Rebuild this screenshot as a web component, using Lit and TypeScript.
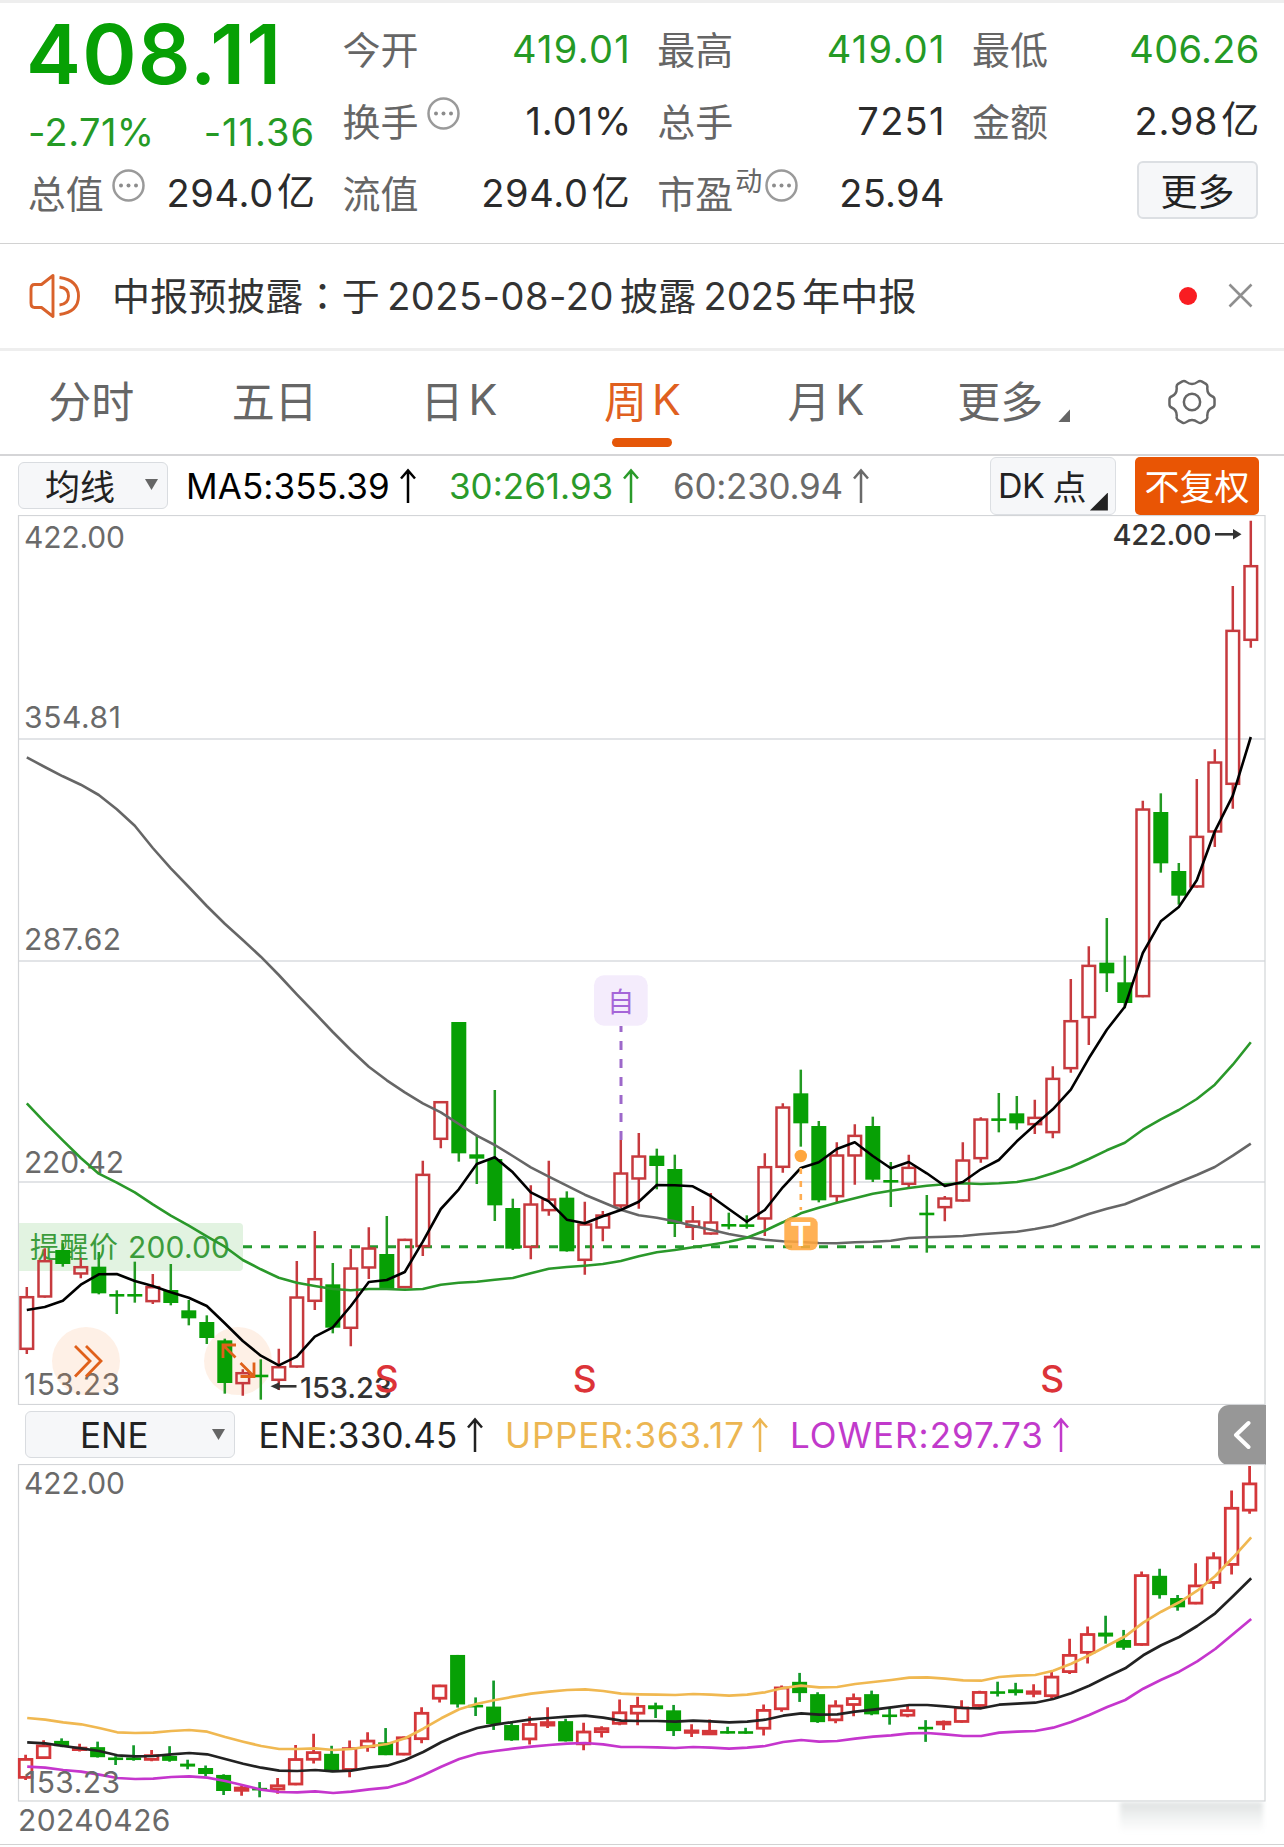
import { LitElement, html, svg, css } from "lit";
import { customElement, property } from "lit/decorators.js";

/* Vertical positions are stored in thirds of a pixel, measured from y = 960. */
type Candle = [high: number, top: number, bottom: number, low: number, up: 0 | 1];

const CANDLES: Candle[] = [
  [981, 1008, 1170, 1182, 1], [865, 900, 1013, 1013, 1], [850, 870, 912, 920, 0], [893, 918, 944, 955, 1],
  [876, 920, 1000, 1003, 0], [991, 1002, 1009, 1062, 0], [905, 1002, 1009, 1028, 0], [942, 978, 1027, 1032, 1],
  [912, 990, 1029, 1036, 0], [1020, 1051, 1075, 1096, 0], [1066, 1086, 1134, 1152, 0], [1136, 1141, 1269, 1301, 0],
  [1228, 1236, 1273, 1307, 1], [1198, 1244, 1251, 1319, 0], [1166, 1218, 1263, 1290, 1], [903, 1009, 1223, 1223, 1],
  [813, 954, 1026, 1050, 1], [909, 973, 1103, 1120, 0], [867, 922, 1107, 1159, 1], [802, 862, 926, 957, 1],
  [768, 882, 984, 984, 0], [836, 836, 985, 985, 1], [602, 641, 862, 888, 1], [423, 423, 540, 565, 1],
  [186, 186, 580, 605, 0], [524, 583, 596, 672, 0], [390, 597, 736, 783, 0], [716, 744, 866, 870, 0],
  [676, 730, 864, 898, 1], [602, 715, 754, 767, 1], [694, 713, 874, 875, 0], [725, 790, 903, 944, 1],
  [753, 763, 806, 844, 1], [540, 637, 740, 745, 1], [519, 586, 659, 746, 1], [566, 587, 618, 688, 0],
  [584, 627, 792, 831, 0], [738, 781, 804, 840, 1], [699, 784, 824, 824, 1], [758, 792, 799, 808, 0],
  [766, 793, 800, 806, 0], [580, 618, 779, 828, 1], [430, 439, 624, 638, 1], [329, 400, 490, 560, 0],
  [483, 498, 721, 727, 0], [547, 583, 712, 730, 1], [493, 524, 590, 674, 1], [470, 498, 659, 666, 0],
  [606, 660, 667, 741, 0], [584, 620, 675, 682, 1], [705, 758, 765, 878, 0], [708, 712, 745, 784, 1],
  [547, 598, 725, 725, 1], [472, 475, 598, 608, 1], [399, 475, 482, 517, 0], [408, 460, 490, 509, 0],
  [419, 470, 496, 522, 1], [319, 353, 520, 535, 1], [57, 180, 328, 338, 1], [-41, 14, 175, 255, 1],
  [-126, 8, 40, 96, 0], [-13, 67, 129, 145, 0], [-478, -455, 112, 112, 1], [-500, -444, -290, -262, 0],
  [-291, -267, -193, -166, 0], [-543, -373, -217, -217, 1], [-632, -596, -382, -339, 1],
  [-1122, -991, -525, -454, 1], [-1318, -1185, -957, -937, 1],
];

const MA5 = [1050, 1041, 1022, 974, 943, 942, 963, 978, 997, 1013, 1038, 1090, 1143, 1187, 1216, 1190, 1130, 1102,
  1038, 966, 960, 936, 845, 747, 688, 612, 592, 637, 697, 724, 779, 790, 769, 750, 725, 675, 676, 679, 708, 747,
  785, 750, 682, 624, 607, 567, 547, 588, 625, 606, 640, 678, 666, 628, 600, 544, 495, 448, 389, 295, 209, 140,
  -21, -116, -159, -239, -386, -493, -669];
const MA30 = [430, 487, 541, 594, 641, 668, 697, 733, 767, 797, 829, 860, 900, 928, 953, 968, 978, 987, 991, 987,
  987, 989, 987, 974, 968, 965, 959, 954, 940, 926, 921, 917, 912, 903, 889, 877, 870, 862, 854, 845, 833, 812,
  787, 760, 743, 728, 715, 701, 692, 684, 677, 673, 670, 672, 670, 666, 656, 640, 621, 597, 571, 548, 509, 478,
  450, 417, 374, 314, 247];
const MA60 = [-608, -579, -551, -526, -495, -452, -403, -336, -275, -219, -162, -109, -60, -10, 45, 103, 159, 216,
  270, 320, 361, 397, 430, 457, 492, 527, 555, 588, 622, 650, 677, 704, 727, 749, 766, 773, 784, 797, 809, 822,
  832, 839, 844, 846, 849, 850, 847, 845, 842, 834, 832, 830, 828, 823, 819, 815, 807, 797, 781, 762, 746, 733,
  711, 689, 667, 645, 621, 587, 551];

/* The envelope lines are measured in thirds of a pixel from y = 1400. */
const UPPER = [954, 959, 967, 973, 984, 997, 999, 998, 993, 990, 995, 1011, 1025, 1038, 1047, 1047, 1045, 1050,
  1047, 1039, 1032, 1015, 986, 955, 928, 911, 900, 890, 881, 875, 870, 868, 873, 881, 883, 884, 885, 882, 884,
  887, 884, 877, 864, 857, 862, 861, 852, 846, 840, 833, 832, 836, 841, 842, 831, 827, 825, 812, 791, 766, 737,
  709, 668, 635, 607, 572, 528, 472, 412];
const ENE = [1027, 1030, 1038, 1045, 1053, 1066, 1069, 1068, 1063, 1059, 1063, 1077, 1091, 1103, 1112, 1113, 1110,
  1114, 1112, 1103, 1097, 1080, 1056, 1027, 1003, 984, 974, 966, 958, 954, 950, 947, 953, 962, 963, 963, 965, 962,
  964, 967, 965, 959, 947, 940, 944, 943, 935, 929, 922, 915, 915, 919, 924, 925, 914, 911, 908, 897, 880, 857,
  830, 805, 766, 736, 711, 678, 640, 588, 535];
const LOWER = [1100, 1103, 1110, 1115, 1124, 1134, 1137, 1136, 1131, 1129, 1133, 1143, 1156, 1169, 1176, 1177,
  1174, 1179, 1175, 1168, 1163, 1148, 1126, 1100, 1077, 1061, 1053, 1046, 1040, 1035, 1031, 1029, 1033, 1041,
  1041, 1042, 1044, 1041, 1043, 1046, 1043, 1038, 1026, 1020, 1025, 1023, 1016, 1010, 1006, 1000, 999, 1003,
  1008, 1008, 998, 995, 993, 983, 966, 945, 921, 900, 866, 839, 815, 784, 747, 702, 657];

const STEP = 18;
const mainY = (v: number) => 960 + v / 3;
const subY = (v: number) => 1466 + (mainY(v) - 520.7) * 0.3769;

const line = (values: number[], x0: number, base: number) =>
  values.map((v, i) => `${(x0 + i * STEP).toFixed(1)},${(base + v / 3).toFixed(1)}`).join(" ");

const candles = (x0: number, y: (v: number) => number) =>
  CANDLES.map(([h, t, b, l, up], i) => {
    const x = x0 + i * STEP;
    const top = y(t);
    const height = Math.max(y(b) - top, 2.6);
    const bottom = top + height;
    return up
      ? svg`<g class="up">
          <path d="M${x} ${y(h)}V${top + 1}M${x} ${bottom - 1}V${Math.max(y(l), bottom)}"/>
          <rect x=${x - 6.3} y=${top + 1.2} width="12.6" height=${Math.max(height - 2.4, 1.5)}/>
        </g>`
      : svg`<g class="down">
          <path d="M${x} ${y(h)}V${Math.max(y(l), bottom)}"/>
          <rect x=${x - 7.5} y=${top} width="15" height=${height}/>
        </g>`;
  });

const label = (text: string, x: number, y: number, width: number, cls = "axis") =>
  svg`<text class=${cls} x=${x} y=${y} textLength=${width}>${text}</text>`;

const FONT = css`
  :host {
    font-family: Inter, "Noto Sans CJK SC", sans-serif;
  }
`;

const CHART = css`
  :host { display: block; }
  svg { display: block; }
  .frame { fill: none; stroke: #d3d5d8; stroke-width: 1.2; }
  .grid { stroke: #e2e4e7; stroke-width: 2; }
  .up { fill: none; stroke: #c63a3e; stroke-width: 2.5; }
  .down { fill: #07a005; }
  .down path { stroke: #239a23; stroke-width: 2.5; }
  .axis { font-size: 30px; fill: #6a6a6a; font-weight: 400; }
  .curve { fill: none; stroke-width: 2.6; stroke-linejoin: round; }
`;

@customElement("info-dot")
export class InfoDot extends LitElement {
  static styles = css`
    :host { display: block; height: 33px; }
    svg { display: block; }
  `;
  render() {
    return html`<svg width="33" height="33" viewBox="0 0 33 33" fill="#8c8c8c">
      <circle cx="16.5" cy="16.5" r="15" fill="none" stroke="#9a9a9a" stroke-width="2.5"/>
      <circle cx="9" cy="16.5" r="2"/><circle cx="16.5" cy="16.5" r="2"/><circle cx="24" cy="16.5" r="2"/>
    </svg>`;
  }
}

@customElement("quote-header")
export class QuoteHeader extends LitElement {
  static styles = [FONT, css`
    :host { display: block; box-sizing: border-box; height: 244px; border-top: 3px solid #eeeeee; border-bottom: 1px solid #d2d2d2; padding: 10px 26px 0 28px; }
    .grid { display: grid; grid-template-columns: repeat(4, 285.5px); column-gap: 29.3px; grid-template-rows: 72px 72px 72px; }
    .cell { display: flex; align-items: center; height: 72px; font-size: 38px; color: #2b2b2b; }
    .name { color: #666666; margin: -4px 0 0 -0.3px; }
    .info { margin: -15px 0 0 8px; }
    .info.tight { margin-left: 3px; }
    .dyn { font-size: 27px; color: #666666; margin: -27px 0 0 2px; }
    .value { margin-left: auto; letter-spacing: 0.7px; margin-right: -2.1px; white-space: nowrap; }
    .value.wide { letter-spacing: 1.3px; margin-right: -2.7px; }
    .value.percent { letter-spacing: 0.9px; margin-right: -3.9px; }
    .value.slim { letter-spacing: 0.3px; margin-right: -1.7px; }
    .unit { margin-left: 3px; vertical-align: 2px; line-height: 0; }
    .green { color: #259a25; }
    .price { font-size: 82.5px; font-weight: 600; color: #07a005; line-height: 82px; letter-spacing: 1.2px; margin-left: -2px; }
    .first { height: 82px; align-items: flex-start; }
    .change { justify-content: space-between; height: 76px; padding-top: 18px; box-sizing: border-box; letter-spacing: 0.4px; }
    .delta { letter-spacing: 1px; margin-right: -1.5px; }
    .more { margin-left: auto; width: 121px; height: 58px; box-sizing: border-box; border: 2px solid #dcdfe3; border-radius: 6px; background: #f6f7f9; display: flex; align-items: center; justify-content: center; color: #222222; font-size: 37px; margin-top: -6px; }
  `];
  private item(name: string, value: string, cls = "", unit = "", info = false) {
    return html`<div class="cell"><span class="name">${name}</span>
      ${info ? html`<info-dot class="info"></info-dot>` : ""}
      <span class="value ${cls}">${value}${unit ? html`<span class="unit">${unit}</span>` : ""}</span></div>`;
  }
  render() {
    return html`<div class="grid">
      <div class="cell first"><span class="price">408.11</span></div>
      ${this.item("今开", "419.01", "green wide")}
      ${this.item("最高", "419.01", "green wide")}
      ${this.item("最低", "406.26", "green slim")}
      <div class="cell change green"><span>-2.71%</span><span class="delta">-11.36</span></div>
      ${this.item("换手", "1.01%", "percent", "", true)}
      ${this.item("总手", "7251", "wide")}
      ${this.item("金额", "2.98", "", "亿")}
      ${this.item("总值", "294.0", "", "亿", true)}
      ${this.item("流值", "294.0", "", "亿")}
      <div class="cell"><span class="name">市盈</span><span class="dyn">动</span>
        <info-dot class="info tight"></info-dot><span class="value slim">25.94</span></div>
      <div class="cell"><span class="more">更多</span></div>
    </div>`;
  }
}

@customElement("news-bar")
export class NewsBar extends LitElement {
  static styles = [FONT, css`
    :host { display: flex; align-items: center; box-sizing: border-box; height: 107px; padding: 0 31px 0 28px; border-bottom: 3px solid #eeeeee; color: #333333; }
    .text { margin: -6px 0 0 30px; font-size: 38px; display: flex; align-items: baseline; white-space: nowrap; letter-spacing: 0.3px; }
    .colon { font-family: "Noto Sans CJK TC", sans-serif; }
    .num { margin: 0 5px 0 7px; letter-spacing: 0; }
    .date { margin: 0 6px 0 7px; letter-spacing: 0.5px; }
    .dot { margin-left: auto; width: 18px; height: 18px; border-radius: 50%; background: #f91d22; }
    .close { margin: -1px 0 0 31px; }
    svg { display: block; }
  `];
  render() {
    return html`
      <svg width="54" height="46" viewBox="0 0 54 46" fill="none" stroke="#d9622b" stroke-width="2.9" stroke-linejoin="round">
        <path d="M25 2.5V43.5L13.5 34.5H6.5Q3 34.5 3 30V16Q3 11.500 6.500 11.500H13.500Z"/>
        <path d="M31.500 4.500Q50.500 7 50.500 23Q50.500 39 31.500 41.500M31.500 14Q40.500 15 40.500 23Q40.500 31 31.500 32"/>
      </svg>
      <div class="text"><span>中报预披露</span><span class="colon">：</span><span>于</span><span class="date">2025-08-20</span><span>披露</span><span class="num">2025</span><span>年中报</span></div>
      <span class="dot"></span>
      <svg class="close" width="25" height="25" viewBox="0 0 25 25" stroke="#8f8f8f" stroke-width="2.6"><path d="M1.500 1.500L23.500 23.500M23.500 1.500L1.500 23.500"/></svg>`;
  }
}

@customElement("period-tabs")
export class PeriodTabs extends LitElement {
  @property() active = "周K";
  static styles = [FONT, css`
    :host { display: grid; grid-template-columns: repeat(7, 1fr); box-sizing: border-box; height: 105px; border-bottom: 2px solid #d5d5d7; }
    .tab { display: flex; flex-direction: column; align-items: center; color: #666666; font-size: 43px; }
    .label { display: flex; align-items: center; height: 87px; padding: 8px 1px 0 0; box-sizing: border-box; gap: 5px; }
    .latin { padding-top: 0; margin-right: -2px; }
    .on { color: #e0601f; }
    .bar { width: 60px; height: 9px; border-radius: 5px; background: #e55709; }
    .label.more { gap: 15px; padding-left: 11px; }
    .label.gear { padding-top: 14px; }
    .corner { width: 12px; height: 13px; background: #666666; clip-path: polygon(100% 0, 100% 100%, 0 100%); margin-top: 34px; }
    svg { display: block; }
  `];
  render() {
    return html`
      ${["分时", "五日", "日K", "周K", "月K"].map((t) => html`<div class="tab ${t === this.active ? "on" : ""}">
        <span class="label">${t.endsWith("K") ? html`<span>${t[0]}</span><span class="latin">K</span>` : t}</span>
        ${t === this.active ? html`<span class="bar"></span>` : ""}</div>`)}
      <div class="tab"><span class="label more">更多<i class="corner"></i></span></div>
      <div class="tab"><span class="label gear">
        <svg width="48" height="46" viewBox="0 0 50 48" fill="none" stroke="#666666" stroke-width="2.6" stroke-linejoin="round">
          <path d="M15 2.500Q17 1.500 19 3Q25 7.500 31 3Q33 1.500 35 2.500L39.500 5Q41.500 6.500 41 9Q40.500 15.500 46 18Q48.500 19 48.500 21.500V26.500Q48.500 29 46 30Q40.500 32.500 41 39Q41.500 41.500 39.500 43L35 45.500Q33 46.500 31 45Q25 40.500 19 45Q17 46.500 15 45.500L10.500 43Q8.500 41.500 9 39Q9.500 32.500 4 30Q1.500 29 1.500 26.500V21.500Q1.500 19 4 18Q9.500 15.500 9 9Q8.500 6.500 10.500 5Z"/>
          <circle cx="25" cy="24" r="8.500"/>
        </svg></span></div>`;
  }
}

@customElement("price-chart")
export class PriceChart extends LitElement {
  static styles = [FONT, CHART, css`
    .remind { fill: #e2f3e1; }
    .remind-text { fill: #3c9c3c; font-size: 30px; }
    .cjk { font-size: 29px; }
    .target { stroke: #239a2e; stroke-width: 3; stroke-dasharray: 9 9; }
    .peak { font-size: 29px; font-weight: 500; fill: #333333; }
    .signal { font-size: 37px; font-weight: 500; fill: #dc3338; text-anchor: middle; }
    .halo { fill: #f58a3a; fill-opacity: 0.13; }
    .tool { fill: none; stroke: #e0601a; stroke-width: 2.8; }
    .tag { font-size: 27px; fill: #a565d8; text-anchor: middle; }
    .t { font-size: 33px; font-weight: 600; fill: #ffffff; text-anchor: middle; }
  `];
  render() {
    return html`<svg width="1284" height="890" viewBox="0 515 1284 890">
      <path class="grid" d="M18 739H1265M18 961H1265M18 1182H1265"/>
      <rect class="frame" x="18.500" y="515.500" width="1246.500" height="889"/>
      ${label("422.00", 24, 548, 101)}${label("354.81", 24, 728, 97)}${label("287.62", 24, 949.500, 97)}
      ${label("220.42", 24, 1172.500, 100)}${label("153.23", 24, 1394.500, 96)}
      <path class="remind" d="M19 1223H239Q243 1223 243 1227V1267Q243 1271 239 1271H19Z"/>
      ${label("提醒价", 30, 1258, 88, "remind-text cjk")}${label("200.00", 128, 1257.500, 102, "remind-text")}
      <path class="target" d="M243 1246.700H1260"/>
      <circle class="halo" cx="86" cy="1361" r="34"/><circle class="halo" cx="238" cy="1361" r="34"/>
      ${candles(26.8, mainY)}
      <polyline class="curve" stroke="#666666" points=${line(MA60, 26.8, 960)}/>
      <polyline class="curve" stroke="#2a982a" points=${line(MA30, 26.8, 960)}/>
      <polyline class="curve" stroke="#000000" points=${line(MA5, 26.8, 960)}/>
      <path class="tool" d="M75 1346L90 1361L75 1376.500M86 1346L101 1361L86 1376.500"/>
      <path class="tool" d="M223 1358V1345H236M223 1345L235.500 1357.500M254 1362.500V1376.500H240.500M240.500 1363L254 1376.500"/>
      <path d="M296.500 1386.300H275" stroke="#333333" stroke-width="2.600"/><path d="M270.500 1386.300L279.500 1382.300V1390.300Z" fill="#333333"/>
      ${label("153.23", 300, 1397.500, 92, "peak")}
      <text class="signal" x="386.700" y="1392">S</text><text class="signal" x="584.700" y="1392">S</text><text class="signal" x="1052.300" y="1392">S</text>
      ${label("422.00", 1112.500, 545, 99, "peak")}
      <path d="M1215 534.300H1236" stroke="#333333" stroke-width="2.600"/><path d="M1241.500 534.300L1233 529V539.600Z" fill="#333333"/>
      <rect x="594" y="975.300" width="53.700" height="50.400" rx="10" fill="#f4ecfc"/>
      <text class="tag" x="620.700" y="1012">自</text>
      <path d="M621 1026V1032M621 1041V1140" stroke="#9d68ca" stroke-width="3" stroke-dasharray="9 9"/>
      <circle cx="800.800" cy="1156" r="6.200" fill="#ffa63e"/>
      <path d="M800.800 1168V1210" stroke="#ffad52" stroke-width="2.600" stroke-dasharray="6 7"/>
      <rect x="784.300" y="1217.300" width="33.400" height="33" rx="7" fill="#ffa63e" fill-opacity=".88"/>
      <text class="t" x="801" y="1246">T</text>
    </svg>`;
  }
}

@customElement("envelope-chart")
export class EnvelopeChart extends LitElement {
  static styles = [FONT, CHART, css`
    .up { stroke: #d4373a; stroke-width: 2.800; }
    .down path { stroke: #12992a; stroke-width: 2.700; }
    .curve { stroke-width: 2.700; }
  `];
  render() {
    return html`<svg width="1284" height="338" viewBox="0 1464 1284 338">
      <rect class="frame" x="18.500" y="1464.500" width="1246.500" height="336.500"/>
      ${candles(25.6, subY)}
      <polyline class="curve" stroke="#f0b851" points=${line(UPPER, 27.2, 1400)}/>
      <polyline class="curve" stroke="#222222" points=${line(ENE, 27.2, 1400)}/>
      <polyline class="curve" stroke="#c536cd" points=${line(LOWER, 27.2, 1400)}/>
      ${label("422.00", 24, 1494, 101)}${label("153.23", 24, 1793, 96)}
    </svg>`;
  }
}

@customElement("app-root")
export class AppRoot extends LitElement {
  static styles = [FONT, css`
    :host { display: flex; flex-direction: column; width: 1284px; height: 1847px; background: #ffffff; overflow: hidden; }
    .bar { display: flex; align-items: center; box-sizing: border-box; height: 59px; font-size: 35px; white-space: nowrap; }
    .ma { padding: 0 25px 0 18px; }
    .select { display: flex; align-items: center; box-sizing: border-box; height: 47px; border: 1.500px solid #d9dce0; border-radius: 6px; background: #f6f7f9; color: #222222; }
    .select.a { width: 150px; padding: 0 9px 2px 26px; justify-content: space-between; }
    .select.b { width: 210px; padding: 0 9px 0 54px; justify-content: space-between; }
    .caret { width: 13px; height: 11px; background: #666666; clip-path: polygon(0 0, 100% 0, 50% 100%); }
    .m1 { margin-left: 18px; width: 263px; color: #000000; letter-spacing: 0.100px; }
    .m2 { width: 224px; color: #2a9a2a; letter-spacing: 0; }
    .m3 { color: #6a6a6a; letter-spacing: -0.250px; }
    .e1 { margin-left: 23.500px; width: 246.500px; color: #222222; letter-spacing: 0.200px; }
    .e2 { width: 285px; color: #ecb652; letter-spacing: 0.850px; }
    .e3 { color: #c13acb; letter-spacing: 1px; }
    .metric { display: flex; align-items: center; gap: 10px; }
    .e2.metric { gap: 7px; }
    .e3.metric { gap: 9px; }
    .arrow { display: block; margin-top: 1px; }
    .dk { margin-left: auto; width: 126px; height: 58px; box-sizing: border-box; border: 1.500px solid #dcdfe3; border-radius: 6px; background: #f6f7f9; color: #222222; display: flex; align-items: center; padding: 0 8px 0 7px; font-size: 34px; gap: 8px; letter-spacing: -0.500px; }
    .corner { width: 18px; height: 18px; background: #222222; clip-path: polygon(100% 0, 100% 100%, 0 100%); margin: 32px 0 0 -4px; flex: none; }
    .adjust { margin-left: 19px; width: 124px; height: 56px; padding-bottom: 2px; border-radius: 5px; background: #e95504; color: #ffffff; display: flex; align-items: center; justify-content: center; font-size: 35px; }
    .ene { padding: 0 18px 0 25px; }
    .fold { margin-left: auto; width: 48px; height: 60px; border-radius: 11px 0 0 11px; background: #979797; display: flex; align-items: center; justify-content: center; }
    .foot { display: flex; justify-content: space-between; box-sizing: border-box; height: 43px; padding: 0 21px 0 18px; border-bottom: 1.500px solid #d2d2d2; }
    .date { font-size: 30px; line-height: 37px; color: #6a6a6a; letter-spacing: 0.400px; }
    .shade { width: 143px; height: 31px; background: linear-gradient(#dfe2e2, #f4f5f5 60%, #ffffff); filter: blur(2px); clip-path: inset(0 -8px -8px -8px); }
  `];
  private metric(cls: string, text: string) {
    return html`<span class="metric ${cls}"><span>${text}</span>
      <svg class="arrow" width="16" height="36" viewBox="0 0 16 36" fill="none" stroke="currentColor" stroke-width="2.500"><path d="M8 35V2.500M1 10.500L8 2.500L15 10.500"/></svg></span>`;
  }
  render() {
    return html`
      <quote-header></quote-header>
      <news-bar></news-bar>
      <period-tabs></period-tabs>
      <div class="bar ma">
        <span class="select a">均线<i class="caret"></i></span>
        ${this.metric("m1", "MA5:355.39")}${this.metric("m2", "30:261.93")}${this.metric("m3", "60:230.94")}
        <span class="dk"><span>DK</span><span>点</span><i class="corner"></i></span>
        <span class="adjust">不复权</span>
      </div>
      <price-chart></price-chart>
      <div class="bar ene">
        <span class="select b">ENE<i class="caret"></i></span>
        ${this.metric("e1", "ENE:330.45")}${this.metric("e2", "UPPER:363.17")}${this.metric("e3", "LOWER:297.73")}
        <span class="fold"><svg width="18" height="30" viewBox="0 0 18 30" fill="none" stroke="#ffffff" stroke-width="4" stroke-linecap="round" stroke-linejoin="round"><path d="M15.500 3L3 15L15.500 27"/></svg></span>
      </div>
      <envelope-chart></envelope-chart>
      <div class="foot"><span class="date">20240426</span><span class="shade"></span></div>`;
  }
}
